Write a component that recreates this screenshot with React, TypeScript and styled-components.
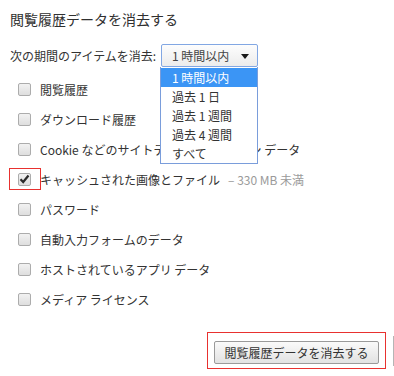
import React from 'react';
import styled, { createGlobalStyle } from 'styled-components';

const GlobalStyle = createGlobalStyle`
  html, body {
    margin: 0;
    padding: 0;
    background: #ffffff;
  }
  body {
    font-family: "Noto Sans CJK JP", "Noto Sans", sans-serif;
    color: #333333;
  }
`;

const Page = styled.div`
  position: relative;
  width: 394px;
  height: 376px;
  box-sizing: border-box;
  padding: 10px 0 0 10px;
  display: flex;
  flex-direction: column;
  overflow: hidden;
`;

const Title = styled.div`
  font-size: 14px;
  line-height: 18px;
  height: 18px;
  color: #303030;
`;

const PeriodRow = styled.div`
  position: relative;
  display: flex;
  align-items: center;
  margin-top: 16px;
  height: 23px;
  font-size: 12px;
`;

const PeriodLabel = styled.span`
  width: 151px;
  white-space: nowrap;
  color: #333;
`;

const SelectBox = styled.div`
  position: relative;
  box-sizing: border-box;
  width: 97px;
  height: 23px;
  border: 1px solid #82a7e3;
  border-radius: 2px;
  background: linear-gradient(#fdfdfd, #ececec);
  display: flex;
  align-items: center;
  padding-left: 10px;
  color: #444;
  font-size: 12px;
`;

const Arrow = styled.span`
  position: absolute;
  right: 8px;
  top: 9px;
  width: 0;
  height: 0;
  border-left: 4px solid transparent;
  border-right: 4px solid transparent;
  border-top: 5px solid #1a1a1a;
`;

const Menu = styled.ul`
  position: absolute;
  left: 150px;
  top: 23px;
  z-index: 5;
  box-sizing: border-box;
  width: 98px;
  margin: 0;
  padding: 1px 0 0;
  list-style: none;
  background: #fff;
  border: 1px solid #7a9ddb;
  border-top: none;
  font-size: 12px;
`;

const MenuItem = styled.li<{ active?: boolean }>`
  height: 19px;
  line-height: 19px;
  padding-left: 11px;
  background: ${(p) => (p.active ? '#3b95f5' : 'transparent')};
  color: ${(p) => (p.active ? '#ffffff' : '#333333')};
  white-space: nowrap;
`;

const List = styled.div`
  display: flex;
  flex-direction: column;
  margin-top: 7px;
`;

const Row = styled.label`
  position: relative;
  display: flex;
  align-items: center;
  height: 30px;
  padding-left: 8px;
  font-size: 12px;
  white-space: nowrap;
  color: #333;
`;

const Box = styled.span`
  box-sizing: border-box;
  display: inline-flex;
  align-items: center;
  justify-content: center;
  width: 13px;
  height: 13px;
  margin-right: 9px;
  border: 1px solid #acacac;
  border-radius: 2px;
  background: linear-gradient(#f2f2f2, #dedede);
  flex-shrink: 0;
`;

const Note = styled.span`
  color: #9a9a9a;
  margin-left: 8px;
`;

const Mark = styled.span`
  position: absolute;
  left: -1px;
  top: 4px;
  width: 32px;
  height: 22px;
  box-sizing: border-box;
  border: 1px solid #e8312f;
  pointer-events: none;
`;

const Footer = styled.div`
  display: flex;
  justify-content: flex-end;
  align-items: center;
  margin-top: 18px;
`;

const ButtonFrame = styled.div`
  box-sizing: border-box;
  width: 179px;
  height: 37px;
  border: 1px solid #e8312f;
  padding: 6px;
`;

const ClearButton = styled.button`
  box-sizing: border-box;
  width: 165px;
  height: 23px;
  padding: 0;
  border: 1px solid #9a9a9a;
  border-radius: 2px;
  background: linear-gradient(#fafafa, #e2e2e2);
  font-family: "Noto Sans CJK JP", "Noto Sans", sans-serif;
  font-size: 12px;
  color: #333;
`;

const Edge = styled.div`
  width: 1px;
  height: 30px;
  margin-left: 7px;
  background: #b5b5b5;
`;

const Check = () => (
  <svg width="11" height="10" viewBox="0 0 11 10">
    <path d="M1.5 5.2 L4.2 8 L9.5 1.5" fill="none" stroke="#2b2b2b" strokeWidth="2.2" />
  </svg>
);

const periods = ['1 時間以内', '過去 1 日', '過去 1 週間', '過去 4 週間', 'すべて'];

interface ItemType {
  label: string;
  note?: string;
  checked?: boolean;
}

const items: ItemType[] = [
  { label: '閲覧履歴' },
  { label: 'ダウンロード履歴' },
  { label: 'Cookie などのサイトデータとプラグイン データ' },
  { label: 'キャッシュされた画像とファイル', note: '–  330 MB 未満', checked: true },
  { label: 'パスワード' },
  { label: '自動入力フォームのデータ' },
  { label: 'ホストされているアプリ データ' },
  { label: 'メディア ライセンス' },
];

const App: React.FC = () => {
  return (
    <>
      <GlobalStyle />
      <Page>
        <Title>閲覧履歴データを消去する</Title>
        <PeriodRow>
          <PeriodLabel>次の期間のアイテムを消去:</PeriodLabel>
          <SelectBox>
            {periods[0]}
            <Arrow />
          </SelectBox>
          <Menu>
            {periods.map((p, i) => (
              <MenuItem key={p} active={i === 0}>
                {p}
              </MenuItem>
            ))}
          </Menu>
        </PeriodRow>
        <List>
          {items.map((item) => (
            <Row key={item.label}>
              <Box>{item.checked && <Check />}</Box>
              {item.label}
              {item.note && <Note>{item.note}</Note>}
              {item.checked && <Mark />}
            </Row>
          ))}
        </List>
        <Footer>
          <ButtonFrame>
            <ClearButton>閲覧履歴データを消去する</ClearButton>
          </ButtonFrame>
          <Edge />
        </Footer>
      </Page>
    </>
  );
};

export default App;
